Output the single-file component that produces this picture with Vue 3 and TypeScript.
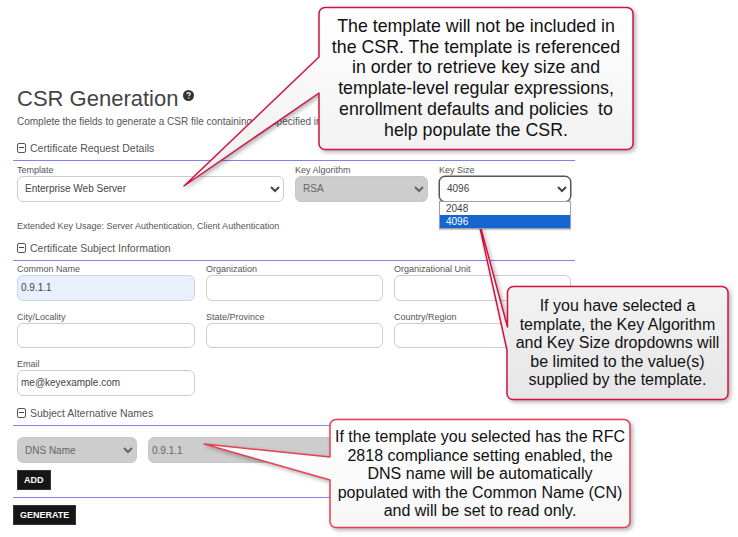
<script setup lang="ts">
interface Field { label: string; value?: string; autofill?: boolean }
const subjectRows: Field[][] = [
  [{ label: 'Common Name', value: '0.9.1.1', autofill: true }, { label: 'Organization' }, { label: 'Organizational Unit' }],
  [{ label: 'City/Locality' }, { label: 'State/Province' }, { label: 'Country/Region' }],
  [{ label: 'Email', value: 'me@keyexample.com' }],
]
const note1 = [
  'The template will not be included in',
  'the CSR. The template is referenced',
  'in order to retrieve key size and',
  'template-level regular expressions,',
  'enrollment defaults and policies\u00a0 to',
  'help populate the CSR.',
]
const note2 = [
  'If you have selected a',
  'template, the Key Algorithm',
  'and Key Size dropdowns will',
  'be limited to the value(s)',
  'supplied by the template.',
]
const note3 = [
  'If the template you selected has the RFC',
  '2818 compliance setting enabled, the',
  'DNS name will be automatically',
  'populated with the Common Name (CN)',
  'and will be set to read only.',
]
</script>

<template>
  <div class="page">
    <header class="head">
      <h1 class="title">CSR Generation<svg class="help" viewBox="0 0 12 12" width="11" height="11"><circle cx="6" cy="6" r="6" fill="#333" /><path d="M4.200 4.700c0-1.200.8-1.900 1.900-1.900s1.800.6 1.800 1.500c0 1.300-1.500 1.300-1.500 2.500" fill="none" stroke="#fff" stroke-width="1.300" /><rect x="5.700" y="8" width="1.300" height="1.400" fill="#fff" /></svg></h1>
      <p class="desc">Complete the fields to generate a CSR file containing the specified information.</p>
    </header>

    <form class="form" @submit.prevent>
      <section class="section">
        <h2 class="sec-head"><span class="minus"></span>Certificate Request Details</h2>
        <div class="sec-body first">
          <div class="req-row">
            <label class="field">
              <span class="lbl">Template</span>
              <select class="ctl sel"><option>Enterprise Web Server</option></select>
            </label>
            <label class="field">
              <span class="lbl">Key Algorithm</span>
              <select class="ctl sel off" disabled><option>RSA</option></select>
            </label>
            <div class="field">
              <span class="lbl">Key Size</span>
              <select class="ctl sel focus"><option>4096</option></select>
              <ul class="menu">
                <li>2048</li>
                <li class="on">4096</li>
              </ul>
            </div>
          </div>
          <p class="eku">Extended Key Usage: Server Authentication, Client Authentication</p>
        </div>
      </section>

      <section class="section">
        <h2 class="sec-head"><span class="minus"></span>Certificate Subject Information</h2>
        <div class="sec-body subject">
          <div class="grid3">
            <template v-for="row in subjectRows" :key="row[0].label">
              <label v-for="f in row" :key="f.label" class="field">
                <span class="lbl">{{ f.label }}</span>
                <input class="ctl inp" :class="{ auto: f.autofill }" :value="f.value ?? ''" readonly />
              </label>
            </template>
          </div>
        </div>
      </section>

      <section class="section">
        <h2 class="sec-head"><span class="minus"></span>Subject Alternative Names</h2>
        <div class="sec-body san">
          <div class="san-row">
            <select class="ctl sel off dns" disabled><option>DNS Name</option></select>
            <input class="ctl inp off grow" value="0.9.1.1" readonly />
          </div>
          <button type="button" class="btn">ADD</button>
        </div>
      </section>

      <div class="actions"><button type="button" class="btn">GENERATE</button></div>
    </form>

    <svg class="shapes" width="738" height="537" viewBox="0 0 738 537" aria-hidden="true">
      <defs>
        <linearGradient id="g1" x1="0" y1="0" x2="0" y2="1"><stop offset="0" stop-color="#ffffff" /><stop offset="1" stop-color="#eeeeee" /></linearGradient>
        <linearGradient id="g2" x1="0" y1="0" x2="0" y2="1"><stop offset="0" stop-color="#fbfbfb" /><stop offset="1" stop-color="#e6e6e6" /></linearGradient>
        <linearGradient id="g3" x1="0" y1="0" x2="0" y2="1"><stop offset="0" stop-color="#ffffff" /><stop offset="1" stop-color="#f6f6f6" /></linearGradient>
      </defs>
      <path class="co" fill="url(#g1)" d="M325 7.500H627a6 6 0 0 1 6 6V143.500a6 6 0 0 1-6 6H325a6 6 0 0 1-6-6V93L184 186 319 57V13.500a6 6 0 0 1 6-6Z" />
      <path class="co" fill="url(#g2)" d="M513 286.500H722a6 6 0 0 1 6 6V393.500a6 6 0 0 1-6 6H513a6 6 0 0 1-6-6V350L476 210 507.500 327V292.500a6 6 0 0 1 6-6Z" />
      <path class="co light" fill="url(#g3)" d="M336 419.500H624a6 6 0 0 1 6 6V521.500a6 6 0 0 1-6 6H336a6 6 0 0 1-6-6V480L204 444 330 457V425.500a6 6 0 0 1 6-6Z" />
    </svg>

    <div class="note n1"><div v-for="l in note1" :key="l">{{ l }}</div></div>
    <div class="note n2"><div v-for="l in note2" :key="l">{{ l }}</div></div>
    <div class="note n3"><div v-for="l in note3" :key="l">{{ l }}</div></div>
  </div>
</template>

<style>
html, body { margin: 0; background: #fff; }
</style>

<style scoped>
.page {
  position: relative;
  width: 738px;
  height: 537px;
  overflow: hidden;
  background: #fff;
  color: #555;
  font-family: "Liberation Sans", Arial, sans-serif;
  padding-top: 85px;
  box-sizing: border-box;
}
.head { padding-left: 17px; }
.title {
  margin: 0;
  font-size: 22px;
  font-weight: 400;
  line-height: 27px;
  color: #444;
  display: flex;
  align-items: flex-start;
}
.help { margin: 5px 0 0 5px; }
.desc { margin: 3px 0 0; font-size: 10px; line-height: 13px; color: #555; white-space: nowrap; }

.form { width: 562px; margin: 9px 0 0 13px; }
.sec-head {
  margin: 0;
  height: 24px;
  padding: 0 0 2px 4px;
  box-sizing: border-box;
  display: flex;
  align-items: center;
  font-size: 10.500px;
  font-weight: 400;
  color: #555;
  border-bottom: 1px solid #8080ee;
}
.minus {
  position: relative;
  flex: none;
  width: 7px;
  height: 8px;
  margin-right: 4px;
  border: 1px solid #555;
  border-radius: 2px;
}
.minus::after {
  content: "";
  position: absolute;
  left: 1px; right: 1px; top: 3.500px;
  height: 1px;
  background: #444;
}
.sec-body { padding: 0 4px; box-sizing: border-box; }
.first { padding-top: 5px; height: 76px; }
.req-row { display: grid; grid-template-columns: 267px 133px 132px; column-gap: 11px; }
.field { display: flex; flex-direction: column; position: relative; }
.lbl { font-size: 9px; line-height: 9px; height: 10px; color: #555; }
.ctl {
  box-sizing: border-box;
  width: 100%;
  height: 25.500px;
  margin: 0;
  border: 1px solid #ccc;
  border-radius: 6px;
  background-color: #fff;
  color: #444;
  font-family: "Liberation Sans", Arial, sans-serif;
  font-size: 10px;
  outline: none;
}
.sel { padding-left: 3px; }
.inp { padding: 0 3px; }
.off, .off:disabled { background-color: #cdcdcd; border-color: #c8c8c8; color: #666; opacity: 1; }
.focus { border-color: #555; box-shadow: 0 0 0 0.500px #555; }
.auto { background-color: #e8f0fe; border-color: #ccd3df; }
.menu {
  position: absolute;
  left: 0;
  right: 0;
  top: 35px;
  margin: 0;
  padding: 0;
  list-style: none;
  border: 1px solid #98a2b3;
  background: #fff;
  font-size: 10px;
  box-shadow: 0 1px 1px rgba(0,0,0,.2);
  z-index: 1;
}
.menu li { height: 13px; line-height: 13px; padding-left: 6px; color: #444; }
.menu li.on { background: #1565d0; color: #fff; }
.eku { margin: 18px 0 0; font-size: 9px; line-height: 12px; color: #555; white-space: nowrap; }

.subject { padding-top: 4px; height: 141px; }
.grid3 { display: grid; grid-template-columns: 178px 177px 177px; column-gap: 11px; row-gap: 12px; }

.san { padding-top: 11px; height: 72px; border-bottom: 1px solid #8080ee; }
.san-row { display: flex; gap: 11px; }
.dns { width: 120px; flex: none; height: 26px; }
.grow { flex: 1; width: auto; height: 26px; }
.btn {
  display: block;
  border: 1px solid #333;
  background: #161616;
  color: #fff;
  font-family: "Liberation Sans", Arial, sans-serif;
  font-size: 9px;
  font-weight: 700;
  height: 20px;
  padding: 0 6px;
  margin: 7px 0 0;
  cursor: pointer;
}
.actions { margin-top: 4px; }

.shapes { position: absolute; left: 0; top: 0; pointer-events: none; }
.co { stroke: #d3123f; stroke-width: 1.500px; stroke-linejoin: round; filter: drop-shadow(2px 2px 2px rgba(0,0,0,.3)); }
.light { stroke: #e9404f; }
.note {
  position: absolute;
  color: #111;
  text-align: center;
  white-space: nowrap;
  font-family: "Liberation Sans", Arial, sans-serif;
}
.n1 { left: 322px; top: 16px; width: 308px; font-size: 17.800px; line-height: 20.700px; }
.n2 { left: 511px; top: 297px; width: 213px; font-size: 16px; line-height: 18.500px; }
.n3 { left: 332px; top: 428px; width: 296px; font-size: 16px; line-height: 18.500px; }
</style>
